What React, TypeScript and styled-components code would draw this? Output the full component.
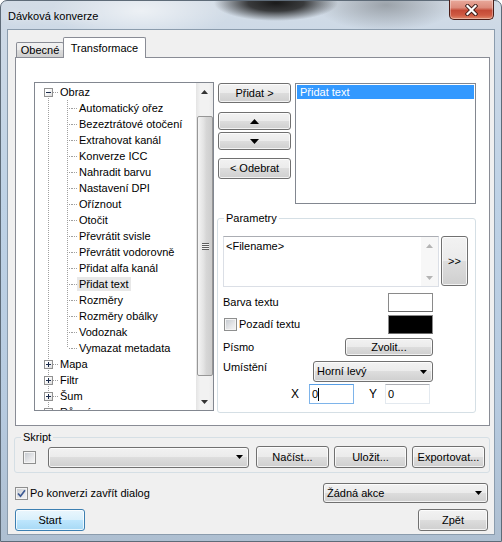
import styled, { createGlobalStyle } from 'styled-components';

const GlobalStyle = createGlobalStyle`
  html, body { margin: 0; padding: 0; background: #fff; }
  body {
    width: 502px;
    height: 542px;
    overflow: hidden;
    font-family: 'Liberation Sans', Tahoma, Arial, sans-serif;
    font-size: 11px;
    color: #000;
  }
  *, *::before, *::after { box-sizing: border-box; }
  button { font: inherit; font-weight: 400; color: inherit; }
`;

const dotV = 'repeating-linear-gradient(to bottom, #a0a0a0 0 1px, transparent 1px 2px)';
const dotH = 'repeating-linear-gradient(to right, #a0a0a0 0 1px, transparent 1px 2px)';

const Window = styled.div`
  width: 502px;
  height: 542px;
  display: flex;
  flex-direction: column;
  padding: 0 6px 6px 6px;
  border: 1px solid #5e6b78;
  border-radius: 7px 7px 0 0;
  background:
    radial-gradient(62px 18px at 275px 2px, #1a1a1a 0%, rgba(30, 30, 30, 0.85) 45%, rgba(60, 60, 60, 0) 100%),
    radial-gradient(70px 26px at 385px 4px, rgba(110, 115, 120, 0.55), rgba(110, 115, 120, 0) 100%),
    radial-gradient(90px 30px at 140px 10px, rgba(255, 255, 255, 0.6), rgba(255, 255, 255, 0) 100%),
    linear-gradient(180deg, #d3dce6 0px, #cdd9e6 30px, #bed2e6 200px, #b7cbe0 400px, #aebfd1 100%);
`;

const TitleBar = styled.div`
  height: 28px;
  flex: none;
  display: flex;
  justify-content: space-between;
  align-items: flex-start;
`;

const Caption = styled.span`
  padding: 8px 0 0 1px;
  line-height: 14px;
  text-shadow: 0 0 8px rgba(255, 255, 255, 0.9);
`;

const CloseButton = styled.div`
  width: 45px;
  height: 20px;
  margin: -1px 1px 0 0;
  border: 1px solid #4a1d17;
  border-top: none;
  border-radius: 0 0 5px 5px;
  background: linear-gradient(180deg, #e9a99b 0%, #dc8b7b 40%, #c44a36 55%, #cf5a43 80%, #e08a6c 100%);
  box-shadow: inset 0 0 0 1px rgba(255, 255, 255, 0.35);
  display: flex;
  align-items: center;
  justify-content: center;
`;

const Client = styled.div`
  flex: 1;
  display: flex;
  flex-direction: column;
  background: #f0f0f0;
  border: 1px solid #8b9cad;
  padding: 7px 4px 0 7px;
`;

const TabStrip = styled.div`
  display: flex;
  align-items: flex-end;
  height: 20px;
  padding-left: 1px;
`;

const Tab = styled.div<{ $active?: boolean; $w: number }>`
  width: ${(p) => p.$w}px;
  height: ${(p) => (p.$active ? 21 : 15)}px;
  margin-left: ${(p) => (p.$active ? -1 : 0)}px;
  margin-bottom: ${(p) => (p.$active ? -1 : 0)}px;
  position: relative;
  z-index: ${(p) => (p.$active ? 2 : 1)};
  border: 1px solid #898c95;
  border-bottom: none;
  border-radius: 2px 2px 0 0;
  background: ${(p) => (p.$active ? '#fff' : 'linear-gradient(180deg, #f2f2f2 0%, #ebebeb 50%, #dddddd 51%, #cfcfcf 100%)')};
  display: flex;
  align-items: center;
  justify-content: center;
  padding-bottom: ${(p) => (p.$active ? 1 : 0)}px;
`;

const TabPanel = styled.div`
  height: 369px;
  border: 1px solid #898c95;
  background: #fff;
  display: flex;
  align-items: flex-start;
  gap: 4px;
  padding: 24px 0 0 18px;
`;

const Tree = styled.div`
  width: 180px;
  height: 329px;
  flex: none;
  border: 1px solid #828790;
  background: #fff;
  display: flex;
`;

const TreeBody = styled.div`
  flex: 1;
  overflow: hidden;
  padding: 1px 0 0 9px;
`;

const TreeRow = styled.div`
  display: flex;
  height: 16px;
  white-space: nowrap;
`;

const StemCell = styled.span<{ $top?: boolean; $bottom?: boolean; $right?: boolean }>`
  flex: none;
  width: 9px;
  height: 16px;
  padding-top: 4px;
  background: ${(p) => {
    const layers: string[] = [];
    if (p.$top) layers.push(`${dotV} 4px 0 / 1px 8px no-repeat`);
    if (p.$bottom) layers.push(`${dotV} 4px 8px / 1px 8px no-repeat`);
    if (p.$right) layers.push(`${dotH} 6px 8px / 3px 1px no-repeat`);
    return layers.length ? layers.join(', ') : 'none';
  }};
`;

const Expander = styled.span<{ $open?: boolean }>`
  display: block;
  width: 9px;
  height: 9px;
  border: 1px solid #919191;
  background:
    linear-gradient(#1c2c4c, #1c2c4c) center / 5px 1px no-repeat,
    ${(p) => (p.$open ? '' : 'linear-gradient(#1c2c4c, #1c2c4c) center / 1px 5px no-repeat,')}
    linear-gradient(135deg, #ffffff 30%, #dcdcdc 100%);
`;

const Branch = styled.span<{ $w: number }>`
  flex: none;
  width: ${(p) => p.$w}px;
  height: 16px;
  background: ${dotH} 0 8px / 100% 1px no-repeat;
`;

const Indent = styled.span<{ $w: number }>`
  flex: none;
  width: ${(p) => p.$w}px;
`;

const NodeLabel = styled.span<{ $selected?: boolean }>`
  height: 14px;
  margin-top: 1px;
  line-height: 14px;
  padding: 0 2px;
  background: ${(p) => (p.$selected ? '#e8e8e8' : 'transparent')};
`;

const VScroll = styled.div<{ $faint?: boolean }>`
  width: 17px;
  flex: none;
  display: flex;
  flex-direction: column;
  background: ${(p) =>
    p.$faint ? '#f7f7f7' : 'linear-gradient(90deg, #e4e4e4, #f2f2f2 25%, #f2f2f2 75%, #eaeaea)'};
`;

const ScrollArrow = styled.div`
  height: 17px;
  flex: none;
  display: flex;
  align-items: center;
  justify-content: center;
`;

const ScrollSpace = styled.div<{ $h?: number }>`
  ${(p) => (p.$h ? `height: ${p.$h}px; flex: none;` : 'flex: 1;')}
`;

const Thumb = styled.div`
  height: 260px;
  flex: none;
  margin-left: 1px;
  border: 1px solid #979797;
  border-radius: 2px;
  background: linear-gradient(90deg, #f4f4f4, #e3e3e3 40%, #d6d6d6 60%, #cdcdcd);
  display: flex;
  align-items: center;
  justify-content: center;
`;

const Grip = styled.span`
  width: 7px;
  height: 7px;
  background: repeating-linear-gradient(to bottom, #5e5e5e 0 1px, #f2f2f2 1px 2px);
`;

const RightArea = styled.div`
  width: 258px;
  display: flex;
  flex-direction: column;
`;

const TopRow = styled.div`
  display: flex;
  gap: 4px;
  margin-top: 1px;
`;

const ButtonColumn = styled.div`
  width: 73px;
  display: flex;
  flex-direction: column;
`;

const Button = styled.button<{ $h: number; $w?: number; $mt?: number; $default?: boolean }>`
  height: ${(p) => p.$h}px;
  width: ${(p) => (p.$w ? `${p.$w}px` : '100%')};
  margin-top: ${(p) => p.$mt ?? 0}px;
  flex: none;
  padding: 0;
  border: 1px solid ${(p) => (p.$default ? '#3c7fb1' : '#707070')};
  border-radius: 3px;
  background: ${(p) =>
    p.$default
      ? 'linear-gradient(180deg, #eaf6fd 0%, #d9f0fc 49%, #bee6fd 50%, #a7d9f5 100%)'
      : 'linear-gradient(180deg, #f2f2f2 0%, #ebebeb 49%, #dddddd 50%, #cfcfcf 100%)'};
  box-shadow: inset 0 0 0 1px rgba(255, 255, 255, 0.75);
  display: flex;
  align-items: center;
  justify-content: center;
  line-height: 13px;
`;

const ListBox = styled.div`
  width: 181px;
  height: 121px;
  border: 1px solid #828790;
  background: #fff;
  padding: 1px;
`;

const ListItem = styled.div<{ $selected?: boolean }>`
  height: 14px;
  line-height: 14px;
  padding-left: 3px;
  background: ${(p) => (p.$selected ? '#3399ff' : 'transparent')};
  color: ${(p) => (p.$selected ? '#fff' : '#000')};
`;

const Group = styled.fieldset<{ $w: number; $mt: number; $pad: string }>`
  width: ${(p) => p.$w}px;
  margin: ${(p) => p.$mt}px 0 0 -1px;
  padding: ${(p) => p.$pad};
  border: 1px solid #d5dfe5;
  border-radius: 3px;
  min-width: 0;
`;

const Legend = styled.legend<{ $ml: number }>`
  padding: 0 2px;
  margin-left: ${(p) => p.$ml}px;
  line-height: 13px;
`;

const MemoRow = styled.div`
  display: flex;
  gap: 2px;
  align-items: flex-start;
`;

const Memo = styled.div`
  width: 216px;
  height: 51px;
  display: flex;
  border: 1px solid #dbdfe6;
  border-top-color: #abadb3;
  background: #fff;
`;

const MemoText = styled.div`
  flex: 1;
  padding: 3px 2px;
  line-height: 13px;
`;

const FormArea = styled.div`
  width: 210px;
  display: flex;
  flex-direction: column;
`;

const FieldRow = styled.div<{ $h: number; $mt: number; $top?: boolean; $end?: boolean }>`
  height: ${(p) => p.$h}px;
  margin-top: ${(p) => p.$mt}px;
  display: flex;
  justify-content: ${(p) => (p.$end ? 'flex-end' : 'space-between')};
  align-items: ${(p) => (p.$top ? 'flex-start' : 'center')};
  line-height: 13px;
  padding-right: ${(p) => (p.$end ? 3 : 0)}px;
`;

const Swatch = styled.div<{ $color: string }>`
  width: 45px;
  height: 19px;
  border: 1px solid #8a8a8a;
  border-bottom-color: #6b6b6b;
  background: ${(p) => p.$color};
`;

const CheckLabel = styled.label`
  display: flex;
  align-items: center;
  gap: 2px;
  line-height: 13px;
`;

const CheckBox = styled.span<{ $ml?: number }>`
  width: 13px;
  height: 13px;
  flex: none;
  margin-left: ${(p) => p.$ml ?? 0}px;
  border: 1px solid #8e8f8f;
  background: linear-gradient(135deg, #c2c7ce 0%, #e6e7e9 60%, #f6f6f6 100%);
  box-shadow: inset 0 0 0 1px #f4f4f4;
  display: flex;
  align-items: center;
  justify-content: center;
`;

const Select = styled.div<{ $w: number; $h: number; $ml?: number }>`
  width: ${(p) => p.$w}px;
  height: ${(p) => p.$h}px;
  margin-left: ${(p) => p.$ml ?? 0}px;
  flex: none;
  border: 1px solid #707070;
  border-radius: 3px;
  background: linear-gradient(180deg, #f2f2f2 0%, #ebebeb 49%, #dddddd 50%, #cfcfcf 100%);
  box-shadow: inset 0 0 0 1px rgba(255, 255, 255, 0.75);
  display: flex;
  align-items: center;
  justify-content: space-between;
  padding: 0 5px 0 3px;
  line-height: 13px;
`;

const TextInput = styled.div<{ $focus?: boolean }>`
  width: 45px;
  height: 20px;
  flex: none;
  border: 1px solid ${(p) => (p.$focus ? '#7eb4ea' : '#e3e9ef')};
  border-top-color: ${(p) => (p.$focus ? '#569de5' : '#abadb3')};
  background: #fff;
  display: flex;
  align-items: center;
  padding-left: 2px;
  line-height: 13px;
`;

const Caret = styled.span`
  width: 1px;
  height: 13px;
  background: #000;
`;

const AxisLabel = styled.span<{ $ml?: number; $mr: number }>`
  margin-left: ${(p) => p.$ml ?? 0}px;
  margin-right: ${(p) => p.$mr}px;
  font-size: 12px;
`;

const ScriptRow = styled.div`
  height: 22px;
  display: flex;
  align-items: center;
`;

const Gap = styled.span<{ $w: number }>`
  width: ${(p) => p.$w}px;
  flex: none;
`;

const BottomRow = styled.div<{ $mt: number; $h: number }>`
  height: ${(p) => p.$h}px;
  margin-top: ${(p) => p.$mt}px;
  margin-right: 2px;
  display: flex;
  align-items: center;
  justify-content: space-between;
`;

function Tri({ dir, w, h, color = '#000' }: { dir: 'up' | 'down'; w: number; h: number; color?: string }) {
  const pts = dir === 'up' ? `0,${h} ${w / 2},0 ${w},${h}` : `0,0 ${w},0 ${w / 2},${h}`;
  return (
    <svg width={w} height={h} viewBox={`0 0 ${w} ${h}`}>
      <polygon points={pts} fill={color} />
    </svg>
  );
}

function Check() {
  return (
    <svg width="9" height="9" viewBox="0 0 9 9">
      <path d="M1 4.5 L3.5 7.2 L8 1.2" fill="none" stroke="#3d5a93" strokeWidth="1.7" />
    </svg>
  );
}

const children = [
  'Automatický ořez',
  'Bezeztrátové otočení',
  'Extrahovat kanál',
  'Konverze ICC',
  'Nahradit barvu',
  'Nastavení DPI',
  'Oříznout',
  'Otočit',
  'Převrátit svisle',
  'Převrátit vodorovně',
  'Přidat alfa kanál',
  'Přidat text',
  'Rozměry',
  'Rozměry obálky',
  'Vodoznak',
  'Vymazat metadata',
];

const roots = ['Mapa', 'Filtr', 'Šum', 'Různé'];

export default function App() {
  return (
    <>
      <GlobalStyle />
      <Window>
        <TitleBar>
          <Caption>Dávková konverze</Caption>
          <CloseButton>
            <svg width="13" height="12" viewBox="0 0 13 12">
              <path d="M2.5 2 L10.5 10 M10.5 2 L2.5 10" stroke="#3a1a16" strokeWidth="4" strokeLinecap="square" />
              <path d="M2.5 2 L10.5 10 M10.5 2 L2.5 10" stroke="#fff" strokeWidth="2.2" strokeLinecap="square" />
            </svg>
          </CloseButton>
        </TitleBar>

        <Client>
          <TabStrip>
            <Tab $w={48}>Obecné</Tab>
            <Tab $w={83} $active>
              Transformace
            </Tab>
          </TabStrip>

          <TabPanel>
            <Tree>
              <TreeBody>
                <TreeRow>
                  <StemCell $bottom>
                    <Expander $open />
                  </StemCell>
                  <Branch $w={5} />
                  <NodeLabel>Obraz</NodeLabel>
                </TreeRow>
                {children.map((name, i) => (
                  <TreeRow key={name}>
                    <StemCell $top $bottom />
                    <Indent $w={10} />
                    <StemCell $top $bottom={i < children.length - 1} $right />
                    <Branch $w={5} />
                    <NodeLabel $selected={name === 'Přidat text'}>{name}</NodeLabel>
                  </TreeRow>
                ))}
                {roots.map((name) => (
                  <TreeRow key={name}>
                    <StemCell $top $bottom>
                      <Expander />
                    </StemCell>
                    <Branch $w={5} />
                    <NodeLabel>{name}</NodeLabel>
                  </TreeRow>
                ))}
              </TreeBody>
              <VScroll>
                <ScrollArrow>
                  <Tri dir="up" w={7} h={4} color="#333" />
                </ScrollArrow>
                <ScrollSpace $h={16} />
                <Thumb>
                  <Grip />
                </Thumb>
                <ScrollSpace />
                <ScrollArrow>
                  <Tri dir="down" w={7} h={4} color="#333" />
                </ScrollArrow>
              </VScroll>
            </Tree>

            <RightArea>
              <TopRow>
                <ButtonColumn>
                  <Button $h={20}>Přidat &gt;</Button>
                  <Button $h={18} $mt={9}>
                    <Tri dir="up" w={9} h={5} />
                  </Button>
                  <Button $h={18} $mt={2}>
                    <Tri dir="down" w={9} h={5} />
                  </Button>
                  <Button $h={21} $mt={8}>
                    &lt; Odebrat
                  </Button>
                </ButtonColumn>
                <ListBox>
                  <ListItem $selected>Přidat text</ListItem>
                </ListBox>
              </TopRow>

              <Group $w={259} $mt={8} $pad="11px 7px 8px 5px">
                <Legend $ml={1}>Parametry</Legend>
                <MemoRow>
                  <Memo>
                    <MemoText>&lt;Filename&gt;</MemoText>
                    <VScroll $faint>
                      <ScrollArrow>
                        <Tri dir="up" w={7} h={4} color="#b4b4b4" />
                      </ScrollArrow>
                      <ScrollSpace />
                      <ScrollArrow>
                        <Tri dir="down" w={7} h={4} color="#b4b4b4" />
                      </ScrollArrow>
                    </VScroll>
                  </Memo>
                  <Button $h={50} $w={27}>
                    &gt;&gt;
                  </Button>
                </MemoRow>
                <FormArea>
                  <FieldRow $h={19} $mt={6}>
                    <span>Barva textu</span>
                    <Swatch $color="#fff" />
                  </FieldRow>
                  <FieldRow $h={19} $mt={3}>
                    <CheckLabel>
                      <CheckBox $ml={1} />
                      Pozadí textu
                    </CheckLabel>
                    <Swatch $color="#000" />
                  </FieldRow>
                  <FieldRow $h={18} $mt={4}>
                    <span>Písmo</span>
                    <Button $h={18} $w={88}>
                      Zvolit...
                    </Button>
                  </FieldRow>
                  <FieldRow $h={21} $mt={5} $top>
                    <span>Umístění</span>
                    <Select $w={120} $h={21}>
                      <span>Horní levý</span>
                      <Tri dir="down" w={7} h={4} />
                    </Select>
                  </FieldRow>
                  <FieldRow $h={20} $mt={2} $end>
                    <AxisLabel $mr={10}>X</AxisLabel>
                    <TextInput $focus>
                      0<Caret />
                    </TextInput>
                    <AxisLabel $ml={15} $mr={8}>
                      Y
                    </AxisLabel>
                    <TextInput>0</TextInput>
                  </FieldRow>
                </FormArea>
              </Group>
            </RightArea>
          </TabPanel>

          <Group $w={476} $mt={5} $pad="2px 5px 4px 8px">
            <Legend $ml={-2}>Skript</Legend>
            <ScriptRow>
              <CheckBox />
              <Select $w={201} $h={21} $ml={12}>
                <span />
                <Tri dir="down" w={7} h={4} />
              </Select>
              <Gap $w={7} />
              <Button $h={22} $w={73}>
                Načíst...
              </Button>
              <Gap $w={5} />
              <Button $h={22} $w={73}>
                Uložit...
              </Button>
              <Gap $w={5} />
              <Button $h={22} $w={73}>
                Exportovat...
              </Button>
            </ScriptRow>
          </Group>

          <BottomRow $mt={10} $h={20}>
            <CheckLabel>
              <CheckBox>
                <Check />
              </CheckBox>
              Po konverzi zavřít dialog
            </CheckLabel>
            <Select $w={165} $h={20}>
              <span>Žádná akce</span>
              <Tri dir="down" w={7} h={4} />
            </Select>
          </BottomRow>
          <BottomRow $mt={6} $h={22}>
            <Button $h={22} $w={70} $default>
              Start
            </Button>
            <Button $h={22} $w={70}>
              Zpět
            </Button>
          </BottomRow>
        </Client>
      </Window>
    </>
  );
}
